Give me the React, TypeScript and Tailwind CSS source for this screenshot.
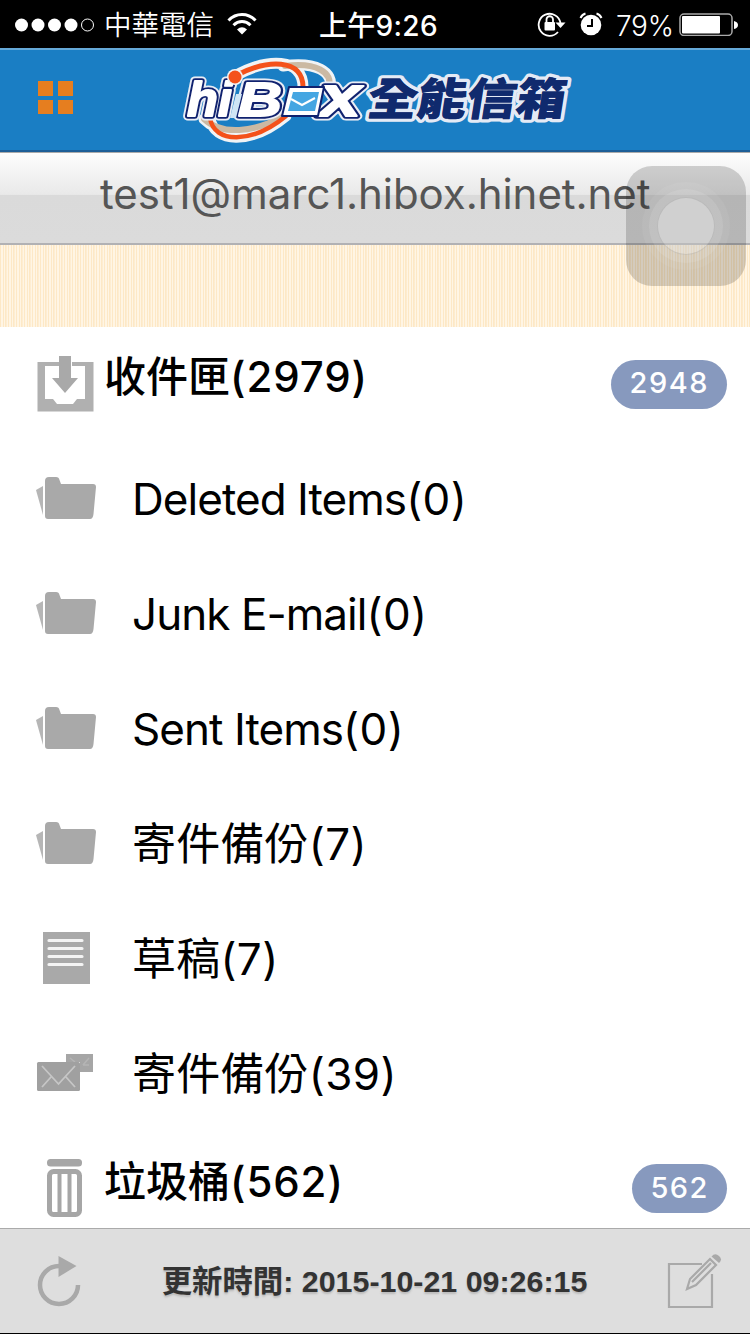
import React from "react";

const folder = (
  <svg width="62" height="46" viewBox="0 0 62 46" fill="#a9a9a9">
    <path d="M1 15 L8 11 V40 Z" opacity=".85" />
    <path d="M10 41 V6 Q10 2 14 2 H21 Q24 2 24.500 5 L26 9 H58 Q61 9 61 12 L58.500 39 Q58 44 55 44 H13 Q10 44 10 41 Z" />
  </svg>
);

const inbox = (
  <svg width="58" height="58" viewBox="0 0 58 58">
    <path fill="#b0b0b0" fillRule="evenodd" d="M1.500 8 H23 V12 H9 V45 H17 L21 50 H37 L41 45 H49 V12 H36 V8 H57.500 V57.500 H1.500 Z" />
    <path fill="#a9a9a9" d="M23 2 H35 V24 H42 L29 39 L16 24 H23 Z" />
  </svg>
);

const draft = (
  <svg width="50" height="54" viewBox="0 0 50 54">
    <rect x="1" y="1" width="47" height="52" fill="#a9a9a9" />
    <g stroke="#f4f4f4" strokeWidth="3.200" strokeLinecap="round">
      <path d="M7 9.500 H40 M7 17.500 H40 M7 25.500 H40 M7 33.500 H40" />
    </g>
  </svg>
);

const mails = (
  <svg width="58" height="40" viewBox="0 0 58 40">
    <path d="M30 1 H57 V19 H44 V9 H30 Z" fill="#a6a6a6" />
    <path d="M34 5 L39 9 M47 12 L53 5 M47 12 H53" stroke="#b5b5b5" strokeWidth="1.500" fill="none" />
    <rect x="1" y="9" width="43" height="29" rx="1.500" fill="#a0a0a0" />
    <path d="M6 13 L22.500 31 L39 13 M6 34 L15 24 M39 34 L30 24" stroke="#c6c6c6" strokeWidth="1.800" fill="none" />
  </svg>
);

const trash = (
  <svg width="38" height="62" viewBox="0 0 38 62">
    <rect x="1" y="2" width="35" height="7.500" rx="3.500" fill="#a6a6a6" />
    <rect x="3.500" y="14.500" width="30" height="43" rx="4" fill="#fff" stroke="#a6a6a6" strokeWidth="5" />
    <path d="M13.500 14 V57 M23.500 14 V57" stroke="#a6a6a6" strokeWidth="4" />
  </svg>
);

function LogoLetters() {
  return (
    <>
      <text x="7" y="60" fontSize="48" textLength="45" lengthAdjust="spacingAndGlyphs">hi</text>
      <text x="58" y="60" fontSize="49" textLength="44" lengthAdjust="spacingAndGlyphs">B</text>
      <text x="140" y="60" fontSize="58" textLength="41" lengthAdjust="spacingAndGlyphs">x</text>
    </>
  );
}

function Logo() {
  return (
    <svg width="392" height="88" viewBox="0 0 392 88">
      <g fill="none" strokeLinecap="round">
        <path d="M55 20 C85 3 125 -1 123 34 M103 10 C136 5 154 16 150 32 M30 62 C34 88 72 88 106 60 M24 63 L30 68" stroke="#f1f3f5" strokeWidth="11" />
        <path d="M105 10 C136 6 153 16 149 32" stroke="#cbb9a3" strokeWidth="6" />
        <path d="M24 63 C42 80 74 76 102 61" stroke="#cbb9a3" strokeWidth="6" />
        <path d="M55 20 C85 4 125 0 123 34" stroke="#f4511a" strokeWidth="5" />
        <path d="M30 62 C34 88 72 88 106 60" stroke="#f4511a" strokeWidth="4.500" />
      </g>
      <g fontFamily="'Liberation Sans', sans-serif" fontWeight="700" fontStyle="italic" strokeLinejoin="round">
        <g fill="#e9edf5" stroke="#e9edf5" strokeWidth="9"><LogoLetters /></g>
        <g fill="#10226f" stroke="#10226f" strokeWidth="5.500"><LogoLetters /></g>
        <path d="M56 38 H62 L56 62 H50 Z" fill="#cfe5f5" />
        <g fill="#fff" stroke="#fff" strokeWidth="1.800"><LogoLetters /></g>
      </g>
      <circle cx="55" cy="21" r="8" fill="#f1f3f5" />
      <circle cx="55" cy="21" r="6.500" fill="#f4511a" />
      <path d="M109 31 H144 L138 60 H102 Z" fill="#fff" stroke="#10226f" strokeWidth="2" strokeLinejoin="round" />
      <path d="M113 36 H139 L135 55 H108 Z" fill="#45a6e2" />
      <path d="M111 43 L122 49 L135 42" stroke="#fff" strokeWidth="2" fill="none" />
      <g transform="translate(188 0) skewX(-9)" fontFamily="'Noto Sans CJK TC', sans-serif" fontWeight="900" fontSize="44" strokeLinejoin="round">
        <text x="7" y="59" textLength="198" lengthAdjust="spacingAndGlyphs" fill="#102a6e" stroke="#e4eaf5" strokeWidth="7" paintOrder="stroke">全能信箱</text>
        <text x="7" y="59" textLength="198" lengthAdjust="spacingAndGlyphs" fill="#102a6e" stroke="#102a6e" strokeWidth="0.500">全能信箱</text>
      </g>
    </svg>
  );
}

function StatusBar() {
  return (
    <div className="flex h-12 shrink-0 items-center bg-black pl-[15px] text-white">
      <div className="flex w-[304px] items-center">
        <svg width="80" height="16" viewBox="0 0 80 16" fill="#fff">
          <circle cx="6.500" cy="9" r="6.500" /><circle cx="23" cy="9" r="6.500" /><circle cx="39.500" cy="9" r="6.500" /><circle cx="56" cy="9" r="6.500" />
          <circle cx="72.500" cy="9" r="6" fill="none" stroke="#fff" />
        </svg>
        <span className="ml-[9px] w-[112px] pt-[2px] text-[27.500px] leading-[48px] font-[350] whitespace-nowrap">中華電信</span>
        <svg className="ml-[11px]" width="30" height="22" viewBox="0 0 30 22" fill="none" stroke="#fff">
          <path d="M1.500 7.500 C9 -.5 21 -.5 28.500 7.500" strokeWidth="3" />
          <path d="M6.500 12.200 C11.500 7.200 18.500 7.200 23.500 12.200" strokeWidth="3" />
          <path d="M10 16.500 Q15 12 20 16.500 L15 21.500 Z" fill="#fff" stroke="none" />
        </svg>
      </div>
      <span className="w-[218px] pt-[3px] text-[28px] font-medium leading-[48px] tracking-[0.300px] whitespace-nowrap">上午9:26</span>
      <svg width="29" height="26" viewBox="0 0 29 26" fill="none" stroke="#fff" strokeWidth="1.800">
        <path d="M21 21 A11 11 0 1 1 23.500 12" />
        <path d="M18.500 11.500 H28.500 L23.500 17 Z" fill="#fff" stroke="none" />
        <rect x="7.500" y="11" width="10.500" height="8.500" rx="1" fill="#fff" stroke="none" />
        <path d="M9.500 12 V8.500 A3.200 3.200 0 0 1 16 8.500 V12" />
      </svg>
      <svg className="ml-[13px]" width="24" height="24" viewBox="0 0 24 24">
        <circle cx="12" cy="13" r="10.300" fill="#fff" />
        <path d="M13 7 V14 H8" fill="none" stroke="#000" strokeWidth="2" />
        <path d="M1.500 6 Q3 2.500 6.500 1.500 M22.500 6 Q21 2.500 17.500 1.500" fill="none" stroke="#fff" strokeWidth="2" />
      </svg>
      <span className="ml-[13px] w-[63px] pt-[4px] text-[28px] font-light leading-[48px] tracking-[-0.300px] whitespace-nowrap">79%</span>
      <svg width="59" height="24" viewBox="0 0 59 24">
        <rect x="1" y="2" width="52" height="21.500" rx="4" fill="none" stroke="#aaa" strokeWidth="1.500" />
        <rect x="3" y="4" width="38" height="17.500" rx="1" fill="#fff" />
        <path d="M55 9 Q59 10 59 13 Q59 16 55 17 Z" fill="#fff" />
      </svg>
    </div>
  );
}

type Row = { name: string; total: number; icon: React.ReactNode; iconPos: string; nameStyle: string; unread?: string };

const latin = "tracking-[-0.950px]";
const rows: Row[] = [
  { name: "收件匣", total: 2979, icon: inbox, iconPos: "pl-[36px]", nameStyle: "", unread: "2948" },
  { name: "Deleted Items", total: 0, icon: folder, iconPos: "pl-[35px]", nameStyle: latin },
  { name: "Junk E-mail", total: 0, icon: folder, iconPos: "pl-[35px]", nameStyle: latin },
  { name: "Sent Items", total: 0, icon: folder, iconPos: "pl-[35px]", nameStyle: latin },
  { name: "寄件備份", total: 7, icon: folder, iconPos: "pl-[35px]", nameStyle: "tracking-[0.200px]" },
  { name: "草稿", total: 7, icon: draft, iconPos: "pl-[42px]", nameStyle: "tracking-[0.200px]" },
  { name: "寄件備份", total: 39, icon: mails, iconPos: "pl-[36px]", nameStyle: "tracking-[0.200px]" },
  { name: "垃圾桶", total: 562, icon: trash, iconPos: "pl-[46px]", nameStyle: "", unread: "562" },
];

function FolderRow({ row }: { row: Row }) {
  const top = row.unread !== undefined;
  return (
    <div className="flex h-[115px] shrink-0 items-center pr-[23px] first:h-[114px]">
      <div className={`shrink-0 pb-[2px] ${top ? "w-[104px]" : "w-[132px]"} ${row.iconPos}`}>{row.icon}</div>
      <span className={`flex-1 leading-[60px] whitespace-nowrap text-black ${top ? "pb-[14px] text-[42px] font-[550]" : "text-[44px]"}`}>
        <span className={row.nameStyle}>{row.name}</span>
        <span className={top ? "tracking-[0.900px]" : "tracking-[0.400px]"}>({row.total})</span>
      </span>
      {top && (
        <span className="flex h-[49px] items-center rounded-full bg-[#8799be] pr-[18px] pb-[2px] pl-[18.500px] text-[29px] font-medium tracking-[1.500px] text-white">{row.unread}</span>
      )}
    </div>
  );
}

export default function App() {
  return (
    <div className="relative flex h-[1334px] w-[750px] flex-col overflow-hidden bg-white font-['Inter','Noto_Sans_CJK_TC',sans-serif]">
      <StatusBar />
      <header className="flex h-[104px] shrink-0 items-center border-t-2 border-b-2 border-t-[#65a9d9] border-b-[#1d5f98] bg-[#1a7ec4] pl-[38px]">
        <div className="grid w-[142px] grid-cols-[15px_15px] gap-x-[5px] gap-y-[4px] pb-[5px]">
          {[0, 1, 2, 3].map((i) => <i key={i} className="h-[14.500px] bg-[#e67e1f]" />)}
        </div>
        <Logo />
      </header>
      <div className="flex h-[93px] shrink-0 items-center border-t border-b-2 border-t-[#aaaaaa] border-b-[#b1b1b4] bg-[linear-gradient(#fdfdfd_0,#e9e9e9_46%,#dadada_47%,#dbdbdb_100%)] pb-[9px] pl-[100px] text-[42px] tracking-[-0.050px] text-[#555]">
        <span className="whitespace-nowrap">test1@marc1.hibox.hinet.net</span>
      </div>
      <div className="h-[82px] shrink-0 bg-[repeating-linear-gradient(90deg,#fde8c6_0,#fde8c6_1px,#fff5e4_1.400px,#fff5e4_2.667px)]" />
      <main className="flex h-[901px] shrink-0 flex-col overflow-hidden">
        {rows.map((row, i) => <FolderRow key={i} row={row} />)}
      </main>
      <footer className="flex h-[106px] shrink-0 items-center justify-between border-t border-b border-t-[#aaa] border-b-black bg-[#dedede] pr-[28px] pl-[37px]">
        <svg width="45" height="52" viewBox="0 0 45 52">
          <path d="M22 11 A19 19 0 1 0 41 30" fill="none" stroke="#a9a9a9" strokeWidth="4.500" />
          <path d="M21.500 1 L39.500 11 L21.500 22 Z" fill="#a9a9a9" />
        </svg>
        <span className="pt-[2px] font-['Liberation_Sans','Noto_Sans_CJK_TC',sans-serif] text-[30.400px] font-bold whitespace-nowrap text-[#333] [text-shadow:0_2px_2px_#bbb]">更新時間: 2015-10-21 09:26:15</span>
        <svg width="55" height="56" viewBox="0 0 55 56" fill="none" stroke="#a9a9a9" strokeWidth="2.200">
          <path d="M35 11 H2 V54 H45 V21" />
          <path d="M20 36 L23 26 L43 6 L49 12 L29 32 Z M25 29 L44 10" />
          <path d="M44.500 3.500 Q48 -.5 52 3 Q56 6.500 52 10 Z" fill="#a9a9a9" stroke="none" />
        </svg>
      </footer>
      <div className="absolute top-[166px] left-[626px] flex h-[120px] w-[120px] items-center justify-center rounded-[26px] bg-black/[.17]">
        <div className="flex h-[88px] w-[88px] items-center justify-center rounded-full bg-white/[.05]">
          <div className="flex h-[74px] w-[74px] items-center justify-center rounded-full bg-white/[.11]">
            <div className="h-[58px] w-[58px] rounded-full border border-black/10 bg-white/25" />
          </div>
        </div>
      </div>
    </div>
  );
}
